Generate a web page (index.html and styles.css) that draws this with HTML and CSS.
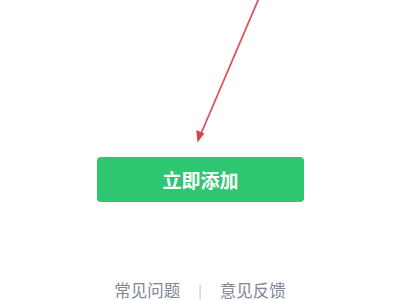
FILE: index.html
```html
<!DOCTYPE html>
<html lang="zh">
<head>
<meta charset="utf-8">
<link rel="stylesheet" href="styles.css">
</head>
<body>
<div class="page">
  <svg class="arrow" width="400" height="300" viewBox="0 0 400 300">
    <line x1="259" y1="-2" x2="200" y2="136" stroke="#d8424c" stroke-width="1.8" stroke-linecap="round" opacity="0.9"/>
    <polygon points="197.5,142.5 196.3,130 204.3,133.5" fill="#d8424c"/>
  </svg>
  <button class="add-btn">立即添加</button>
  <div class="links">
    <span class="link">常见问题</span>
    <span class="sep">|</span>
    <span class="link">意见反馈</span>
  </div>
</div>
</body>
</html>
```
FILE: styles.css
```css
html, body {
  margin: 0;
  padding: 0;
  background: #ffffff;
}
.page {
  position: relative;
  width: 400px;
  height: 300px;
  overflow: hidden;
  display: flex;
  flex-direction: column;
  align-items: center;
  font-family: "Noto Sans CJK SC", "Noto Sans", sans-serif;
}
.arrow {
  position: absolute;
  left: 0;
  top: 0;
}
.add-btn {
  margin-top: 157px;
  margin-left: 1px;
  width: 207px;
  height: 45px;
  border: none;
  border-radius: 4px;
  background: #2fc672;
  color: #ffffff;
  font-family: "Noto Sans CJK SC", sans-serif;
  font-size: 19px;
  font-weight: 700;
  padding: 0;
  display: flex;
  align-items: center;
  justify-content: center;
}
.links {
  margin-top: 80px;
  display: flex;
  align-items: center;
  gap: 18px;
  color: #7f8693;
  font-size: 16.5px;
  line-height: 17px;
}
.sep {
  color: #b5bac1;
  font-size: 13px;
}
```
